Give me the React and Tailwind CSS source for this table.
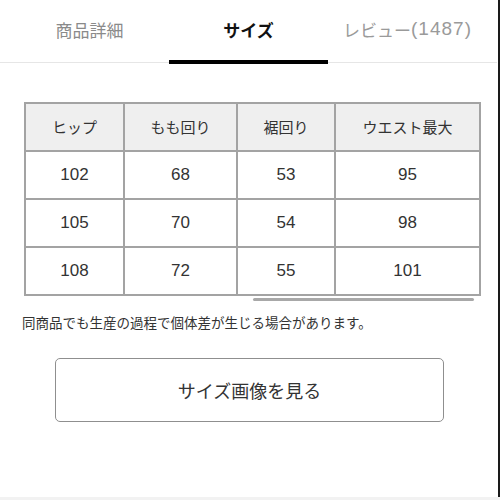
import React from "react";

const jp = { fontFamily: '"Noto Sans CJK JP", "Noto Sans", sans-serif' };
const num = { fontFamily: '"Liberation Sans", "Noto Sans CJK JP", sans-serif' };

const headers = ["ヒップ", "もも回り", "裾回り", "ウエスト最大"];
const rows = [
  ["102", "68", "53", "95"],
  ["105", "70", "54", "98"],
  ["108", "72", "55", "101"],
];

const App = () => {
  return (
    <div className="relative w-[500px] h-[500px] bg-white overflow-hidden" style={jp}>
      {/* tabs */}
      <div className="relative border-b border-[#e6e6e6] w-[497px]">
        <div className="grid grid-cols-3 px-[10px] h-[62px]">
          <div className="flex items-center justify-center text-[17px] text-[#8a8a8a] pb-[3px]">商品詳細</div>
          <div className="relative flex items-center justify-center text-[17px] text-[#111] font-bold pb-[3px]">
            サイズ
            <div className="absolute left-0 right-0 bottom-[-2px] h-[4px] bg-black"></div>
          </div>
          <div className="flex items-center justify-center text-[17px] text-[#9a9a9a] pb-[3px]">
            レビュー<span className="text-[19px] tracking-[1px]" style={num}>(1487)</span>
          </div>
        </div>
      </div>

      {/* size table */}
      <div className="pl-[24px] pt-[39px] w-[479px]">
        <table className="table-fixed border-collapse w-[455px]">
          <colgroup>
            <col className="w-[99px]" />
            <col className="w-[113px]" />
            <col className="w-[98px]" />
            <col className="w-[145px]" />
          </colgroup>
          <thead>
            <tr className="h-[48px] bg-[#efefef]">
              {headers.map((h) => (
                <th key={h} className="border-2 border-[#a3a3a3] font-normal text-[15px] text-[#333]">
                  {h}
                </th>
              ))}
            </tr>
          </thead>
          <tbody>
            {rows.map((r, i) => (
              <tr key={i} className="h-[48px]">
                {r.map((c, j) => (
                  <td key={j} className="border-2 border-[#a3a3a3] text-center text-[17px] text-[#333]" style={num}>
                    {c}
                  </td>
                ))}
              </tr>
            ))}
          </tbody>
        </table>
        <div className="ml-[229px] mt-[2px] w-[221px] h-[3px] rounded-full bg-[#a8a8a8]"></div>
      </div>

      <p className="pl-[22px] mt-[11px] text-[13.5px] text-[#333] leading-[20px]">
        同商品でも生産の過程で個体差が生じる場合があります。
      </p>

      <div className="px-[55px] mt-[26px] w-[500px]">
        <button className="w-[389px] h-[64px] border border-[#8f8f8f] rounded-[5px] bg-white text-[18px] text-[#333]">
          サイズ画像を見る
        </button>
      </div>

      {/* frame edges */}
      <div className="absolute top-0 right-0 w-[2px] h-full bg-[#1a1a1a]"></div>
      <div className="absolute bottom-0 left-0 w-full h-[3px] bg-[#f2f2f2]"></div>
    </div>
  );
};

export default App;
